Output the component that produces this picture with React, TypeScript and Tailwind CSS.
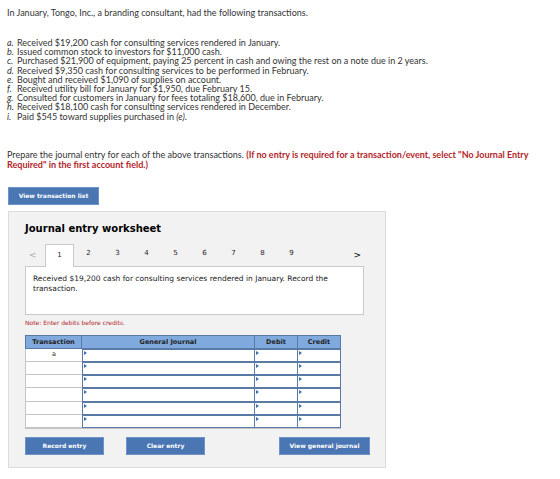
import type { ReactNode } from 'react'

const items: [string, ReactNode][] = [
  ['a.', 'Received $19,200 cash for consulting services rendered in January.'],
  ['b.', 'Issued common stock to investors for $11,000 cash.'],
  ['c.', 'Purchased $21,900 of equipment, paying 25 percent in cash and owing the rest on a note due in 2 years.'],
  ['d.', 'Received $9,350 cash for consulting services to be performed in February.'],
  ['e.', 'Bought and received $1,090 of supplies on account.'],
  ['f.', 'Received utility bill for January for $1,950, due February 15.'],
  ['g.', 'Consulted for customers in January for fees totaling $18,600, due in February.'],
  ['h.', 'Received $18,100 cash for consulting services rendered in December.'],
  ['i.', <>Paid $545 toward supplies purchased in <i>(e)</i>.</>],
]

const tabs = [1, 2, 3, 4, 5, 6, 7, 8, 9]

function Btn({ children, className = '' }: { children: ReactNode; className?: string }) {
  return (
    <button
      className={`h-[18px] bg-[#4a76b4] border border-[#6f93c6] text-white text-[6px] font-bold font-['DejaVu_Sans',Verdana,sans-serif] flex items-center justify-center ${className}`}
    >
      {children}
    </button>
  )
}

// marker that sits in the top-left corner of each entry field
function Caret() {
  return <span className="absolute left-[1px] top-[1px] w-0 h-0 border-t-[2px] border-b-[2px] border-l-[3px] border-t-transparent border-b-transparent border-l-[#3f6fb0]" />
}

function Row({ label }: { label?: string }) {
  return (
    <div className="flex h-[13.2px]">
      <div className="w-[57px] border-l border-b border-[#c4c4c4] bg-white text-center text-[6.5px] leading-[10px]">
        {label}
      </div>
      <div className="relative w-[173px] border-[1.5px] border-[#5a7aa6] bg-white"><Caret /></div>
      <div className="relative w-[43px] border-[1.5px] border-l-0 border-[#5a7aa6] bg-white"><Caret /></div>
      <div className="relative w-[43px] border-[1.5px] border-l-0 border-[#5a7aa6] bg-white"><Caret /></div>
    </div>
  )
}

export default function App() {
  return (
    <div className="w-[560px] h-[479px] overflow-hidden bg-white text-[#333] px-[7px] pt-[8px] font-['Lato','Open_Sans',sans-serif]">
      <p className="text-[9px] leading-[10px]">
        In January, Tongo, Inc., a branding consultant, had the following transactions.
      </p>

      <ul className="mt-[20px] text-[9px] leading-[9.2px]">
        {items.map(([k, t]) => (
          <li key={k} className="flex">
            <span className="w-[10px] italic">{k}</span>
            <span>{t}</span>
          </li>
        ))}
      </ul>

      <div className="mt-[29px] text-[9px] leading-[10px]">
        Prepare the journal entry for each of the above transactions.{' '}
        <b className="text-[#b2252a]">
          (If no entry is required for a transaction/event, select "No Journal Entry Required" in the first account field.)
        </b>
      </div>

      <Btn className="mt-[17px] ml-[1px] w-[91px]">View transaction list</Btn>

      {/* worksheet panel */}
      <div className="mt-[6px] ml-[1px] w-[378px] h-[257px] bg-[#f2f2f2] border border-[#dcdcdc] pl-[16px] pt-[10px] font-['DejaVu_Sans',Verdana,sans-serif]">
        <h2 className="text-[10px] leading-[14px] font-bold text-black">Journal entry worksheet</h2>

        <div className="mt-[7px] w-[339px] flex items-end h-[23px] text-[7px] text-[#222]">
          <span className="w-[20px] pl-[4px] pb-[6px] text-[#aaa] text-[9px] leading-[10px]">&lt;</span>
          {tabs.map((n) => (
            <div
              key={n}
              className={`w-[29px] h-[23px] flex items-center justify-center pb-[2px] ${
                n === 1 ? 'bg-white border border-b-0 border-[#c9c9c9] relative top-[1px] z-10' : ''
              }`}
            >
              {n}
            </div>
          ))}
          <span className="ml-auto pr-[3px] pb-[6px] text-[9px] leading-[10px] text-black">&gt;</span>
        </div>

        <div className="w-[339px] h-[49px] bg-white border border-[#c9c9c9] px-[7px] pt-[7px] text-[7.5px] leading-[10px] text-[#222]">
          Received $19,200 cash for consulting services rendered in January. Record the transaction.
        </div>

        <p className="mt-[4px] text-[6px] leading-[8px] text-[#b2252a]">Note: Enter debits before credits.</p>

        <div className="mt-[8px] w-[316px] border-b border-[#c4c4c4]">
          <div className="flex h-[14px] bg-[#80a9dd] border border-[#5a7aa6] text-[6.5px] font-bold text-[#222] leading-[12px]">
            <div className="w-[56px] text-center border-r border-[#5a7aa6]">Transaction</div>
            <div className="w-[173px] text-center border-r border-[#5a7aa6]">General Journal</div>
            <div className="w-[43px] text-center border-r border-[#5a7aa6]">Debit</div>
            <div className="flex-1 text-center">Credit</div>
          </div>
          <Row label="a" />
          <Row />
          <Row />
          <Row />
          <Row />
          <Row />
        </div>

        <div className="mt-[8px] flex w-[345px]">
          <Btn className="w-[79px]">Record entry</Btn>
          <Btn className="ml-[22px] w-[79px]">Clear entry</Btn>
          <Btn className="ml-auto w-[91px]">View general journal</Btn>
        </div>
      </div>
    </div>
  )
}
